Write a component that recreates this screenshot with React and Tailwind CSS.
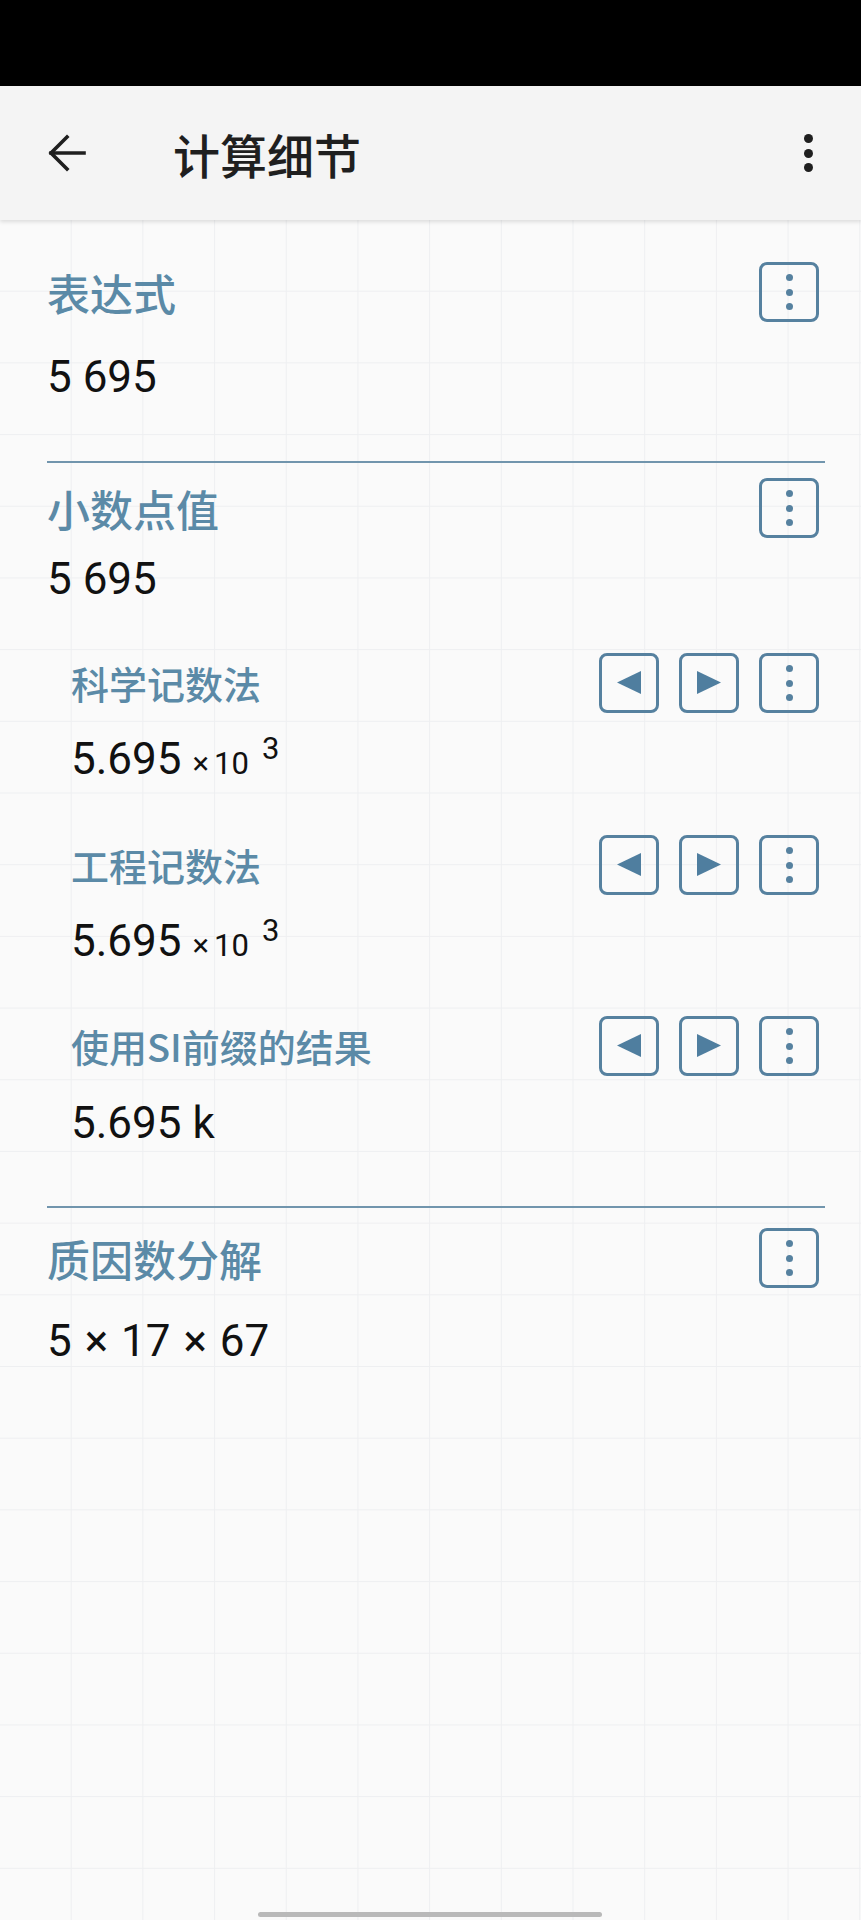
import React from 'react'

const labelCls = "font-['Noto_Sans_CJK_SC','Noto_Sans',sans-serif] font-medium text-[#5b8aa7] leading-none"
const numCls = "font-['Roboto','Liberation_Sans',sans-serif] text-[44px] leading-[52px] h-[52px] text-[#111]"

const Dots = ({ color = 'bg-[#56819f]', size = 'w-[7px] h-[7px]', gap = 'gap-[7.5px]' }) => (
  <div className={`flex flex-col items-center ${gap}`}>
    <span className={`${size} rounded-full ${color}`} />
    <span className={`${size} rounded-full ${color}`} />
    <span className={`${size} rounded-full ${color}`} />
  </div>
)

const Btn = ({ children }) => (
  <div className="w-[60px] h-[60px] rounded-[8px] border-[3px] border-[#56819f] flex items-center justify-center">
    {children}
  </div>
)

const Prev = () => (
  <Btn>
    <svg width="24" height="24" viewBox="0 0 24 24">
      <polygon points="24,0 24,23 0,11.5" fill="#4f7e9f" />
    </svg>
  </Btn>
)

const Next = () => (
  <Btn>
    <svg width="24" height="24" viewBox="0 0 24 24">
      <polygon points="0,0 0,23 24,11.5" fill="#4f7e9f" />
    </svg>
  </Btn>
)

const More = () => (
  <Btn>
    <Dots />
  </Btn>
)

// section heading row: label on the left, buttons on the right
const Row = ({ label, small, arrows, className = '' }) => (
  <div className={`flex items-center justify-between h-[60px] pr-[6px] ${className}`}>
    <div className={`${labelCls} ${small ? 'text-[38px] pl-[24px]' : 'text-[43px]'}`}>{label}</div>
    <div className="flex gap-[20px]">
      {arrows ? <Prev /> : null}
      {arrows ? <Next /> : null}
      <More />
    </div>
  </div>
)

const Sci = ({ className = '' }) => (
  <div className={`${numCls} pl-[24px] whitespace-nowrap ${className}`}>
    5.695
    <span className="text-[31px] leading-none ml-[11px]">×</span>
    <span className="text-[31px] leading-none ml-[5px]">10</span>
    <span className="text-[31px] leading-none ml-[13px] [vertical-align:15px]">3</span>
  </div>
)

const Divider = ({ className = '' }) => <div className={`h-[2px] bg-[#7195ad] ${className}`} />

export default function App() {
  return (
    <div className="min-h-[1920px] w-[861px] flex flex-col bg-[#fafafa]">
      {/* status bar */}
      <div className="h-[86px] bg-black shrink-0" />

      {/* toolbar */}
      <div className="h-[134px] shrink-0 bg-[#f4f4f4] flex items-center pl-[48px] pr-[48px] relative z-10 shadow-[0_2px_4px_rgba(0,0,0,0.12)]">
        <svg width="38" height="38" viewBox="0 0 38 38" fill="none" stroke="#1f1f1f" strokeWidth="3.6" strokeLinecap="square">
          <path d="M3 19 H36" />
          <path d="M19 3 L3 19 L19 35" strokeLinejoin="miter" />
        </svg>
        <div className="ml-[87px] font-['Noto_Sans_CJK_SC','Noto_Sans',sans-serif] font-medium text-[47px] leading-none text-[#1f1f1f]">
          计算细节
        </div>
        <div className="ml-auto">
          <Dots color="bg-[#1f1f1f]" size="w-[9px] h-[9px]" gap="gap-[5.5px]" />
        </div>
      </div>

      {/* content on grid paper */}
      <div className="flex-1 flex flex-col [background-image:linear-gradient(to_right,#eeeff1_1px,transparent_1px),linear-gradient(to_bottom,#eeeff1_1px,transparent_1px)] [background-size:71.7px_71.7px] [background-position:-1px_-1px]">
        <div className="pl-[47px] pr-[36px] flex flex-col">
          <Row label="表达式" className="mt-[42px]" />
          <div className={`${numCls} mt-[29px]`}>5 695</div>

          <Divider className="mt-[58px]" />

          <Row label="小数点值" className="mt-[15px]" />
          <div className={`${numCls} mt-[15px]`}>5 695</div>

          <Row label="科学记数法" small arrows className="mt-[48px]" />
          <Sci className="mt-[20px]" />

          <Row label="工程记数法" small arrows className="mt-[50px]" />
          <Sci className="mt-[20px]" />

          <Row label="使用SI前缀的结果" small arrows className="mt-[49px]" />
          <div className={`${numCls} pl-[24px] mt-[21px]`}>5.695 k</div>

          <Divider className="mt-[57px]" />

          <Row label="质因数分解" className="mt-[20px]" />
          <div className={`${numCls} mt-[27px] [word-spacing:2px]`}>5 × 17 × 67</div>
        </div>

        {/* gesture bar */}
        <div className="mt-auto pb-[3px] flex justify-center">
          <div className="w-[344px] h-[5px] rounded-full bg-[#b9b9b9] ml-[-1px]" />
        </div>
      </div>
    </div>
  )
}
